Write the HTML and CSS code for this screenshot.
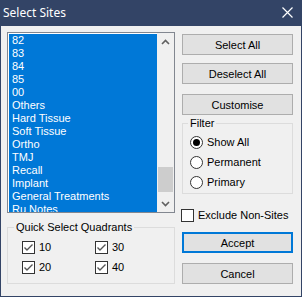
FILE: index.html
```html
<!DOCTYPE html>
<html lang="en">
<head>
    <meta charset="UTF-8">
    <meta name="viewport" content="width=device-width, initial-scale=1.0">
    <title>Select Sites</title>
    <link rel="stylesheet" href="styles.css">
</head>
<body>
    <div class="window">
        <div class="titlebar">
            <span class="title">Select Sites</span>
            <svg class="close" width="11" height="11" viewBox="0 0 11 11">
                <path d="M0.5 0.5 L10.5 10.5 M10.5 0.5 L0.5 10.5" stroke="#fff" stroke-width="1.2" fill="none"/>
            </svg>
        </div>
        <div class="client">
            <div class="left-col">
                <div class="listbox">
                    <div class="list">
                        <div class="item">82</div>
                        <div class="item">83</div>
                        <div class="item">84</div>
                        <div class="item">85</div>
                        <div class="item">00</div>
                        <div class="item">Others</div>
                        <div class="item">Hard Tissue</div>
                        <div class="item">Soft Tissue</div>
                        <div class="item">Ortho</div>
                        <div class="item">TMJ</div>
                        <div class="item">Recall</div>
                        <div class="item">Implant</div>
                        <div class="item">General Treatments</div>
                        <div class="item">Ru Notes</div>
                    </div>
                    <div class="scrollbar">
                        <div class="arrow">
                            <svg width="9" height="6" viewBox="0 0 9 6"><path d="M1 5 L4.5 1.5 L8 5" stroke="#606060" stroke-width="1.6" fill="none"/></svg>
                        </div>
                        <div class="track">
                            <div class="thumb"></div>
                        </div>
                        <div class="arrow">
                            <svg width="9" height="6" viewBox="0 0 9 6"><path d="M1 1 L4.5 4.5 L8 1" stroke="#606060" stroke-width="1.6" fill="none"/></svg>
                        </div>
                    </div>
                </div>
                <fieldset class="group quadrants">
                    <legend>Quick Select Quadrants</legend>
                    <div class="quad-grid">
                        <label class="check"><span class="box checked"></span>10</label>
                        <label class="check"><span class="box checked"></span>30</label>
                        <label class="check"><span class="box checked"></span>20</label>
                        <label class="check"><span class="box checked"></span>40</label>
                    </div>
                </fieldset>
            </div>
            <div class="right-col">
                <div class="btn btn-select">Select All</div>
                <div class="btn btn-deselect">Deselect All</div>
                <div class="btn btn-custom">Customise</div>
                <fieldset class="group filter">
                    <legend>Filter</legend>
                    <label class="radio"><span class="dot selected"></span>Show All</label>
                    <label class="radio"><span class="dot"></span>Permanent</label>
                    <label class="radio"><span class="dot"></span>Primary</label>
                </fieldset>
                <label class="check exclude"><span class="box"></span>Exclude Non-Sites</label>
                <div class="btn btn-accept">Accept</div>
                <div class="btn btn-cancel">Cancel</div>
            </div>
        </div>
    </div>
</body>
</html>
```

FILE: styles.css
```css
body {
    margin: 0;
    font-family: "Liberation Sans", Arial, sans-serif;
    font-size: 11px;
    color: #000;
}
.window {
    width: 302px;
    height: 297px;
    box-sizing: border-box;
    background-color: #334466;
    padding: 0 1px 1px 1px;
    display: flex;
    flex-direction: column;
}
.titlebar {
    height: 26px;
    display: flex;
    align-items: center;
    justify-content: space-between;
    padding: 0 9px 0 3px;
    margin: 0 -1px;
}
.title {
    font-family: "Noto Sans", sans-serif;
    font-size: 12px;
    color: #fff;
    padding-bottom: 1px;
}
.close {
    display: block;
    margin-bottom: 2px;
}
.client {
    flex: 1;
    background-color: #f0f0f0;
    display: flex;
    padding: 6px 0 0 6px;
}
.left-col {
    width: 168px;
}
.listbox {
    height: 181px;
    box-sizing: border-box;
    border: 1px solid #828790;
    background-color: #fff;
    display: flex;
}
.list {
    flex: 1;
    padding: 1px 0 1px 1px;
    overflow: hidden;
}
.item {
    background-color: #0078d7;
    color: #fff;
    height: 13px;
    line-height: 13px;
    padding-left: 3px;
    white-space: nowrap;
}
.scrollbar {
    width: 17px;
    background-color: #f0f0f0;
    display: flex;
    flex-direction: column;
}
.arrow {
    height: 17px;
    display: flex;
    align-items: center;
    justify-content: center;
}
.arrow svg {
    display: block;
}
.track {
    flex: 1;
}
.thumb {
    margin: 117px 1px 0 1px;
    height: 25px;
    background-color: #cdcdcd;
}
.group {
    margin: 0;
    border: 1px solid #dcdcdc;
    min-width: 0;
}
.group legend {
    padding: 0 2px;
    line-height: 13px;
}
.quadrants {
    margin-top: 8px;
    padding: 7px 0 9px 14px;
}
.quadrants legend {
    margin: 0 auto 0 -8px;
}
.quad-grid {
    display: grid;
    grid-template-columns: 73px 73px;
    row-gap: 7px;
}
.check {
    display: flex;
    align-items: center;
    gap: 4px;
    height: 13px;
    line-height: 13px;
}
.box {
    width: 13px;
    height: 13px;
    box-sizing: border-box;
    border: 1px solid #333;
    background-color: #fff;
    flex: none;
}
.box.checked {
    background: #fff url("data:image/svg+xml,%3Csvg xmlns='http://www.w3.org/2000/svg' width='11' height='11'%3E%3Cpath d='M1.5 5.5 L4 8 L9.5 2.5' stroke='%23555' stroke-width='1.4' fill='none'/%3E%3C/svg%3E") no-repeat center;
}
.right-col {
    width: 111px;
    margin-left: 7px;
    padding-top: 2px;
    display: flex;
    flex-direction: column;
}
.btn {
    height: 21px;
    box-sizing: border-box;
    border: 1px solid #adadad;
    background-color: #e1e1e1;
    display: flex;
    align-items: center;
    justify-content: center;
}
.btn-deselect {
    margin-top: 8px;
}
.btn-custom {
    margin-top: 10px;
}
.filter {
    margin-top: 2px;
    padding: 6px 0 4px 7px;
}
.filter legend {
    margin: 0 auto 0 -2px;
}
.radio {
    display: flex;
    align-items: center;
    gap: 4px;
    height: 13px;
    line-height: 13px;
    margin-bottom: 7px;
}
.radio:last-child {
    margin-bottom: 0;
}
.dot {
    width: 13px;
    height: 13px;
    box-sizing: border-box;
    border: 1px solid #333;
    border-radius: 50%;
    background-color: #fff;
    flex: none;
    display: flex;
    align-items: center;
    justify-content: center;
}
.dot.selected::after {
    content: "";
    width: 7px;
    height: 7px;
    border-radius: 50%;
    background-color: #000;
}
.exclude {
    margin-top: 15px;
    margin-left: -1px;
}
.btn-accept {
    margin-top: 10px;
    border: 2px solid #0078d7;
}
.btn-cancel {
    margin-top: 10px;
}
```
